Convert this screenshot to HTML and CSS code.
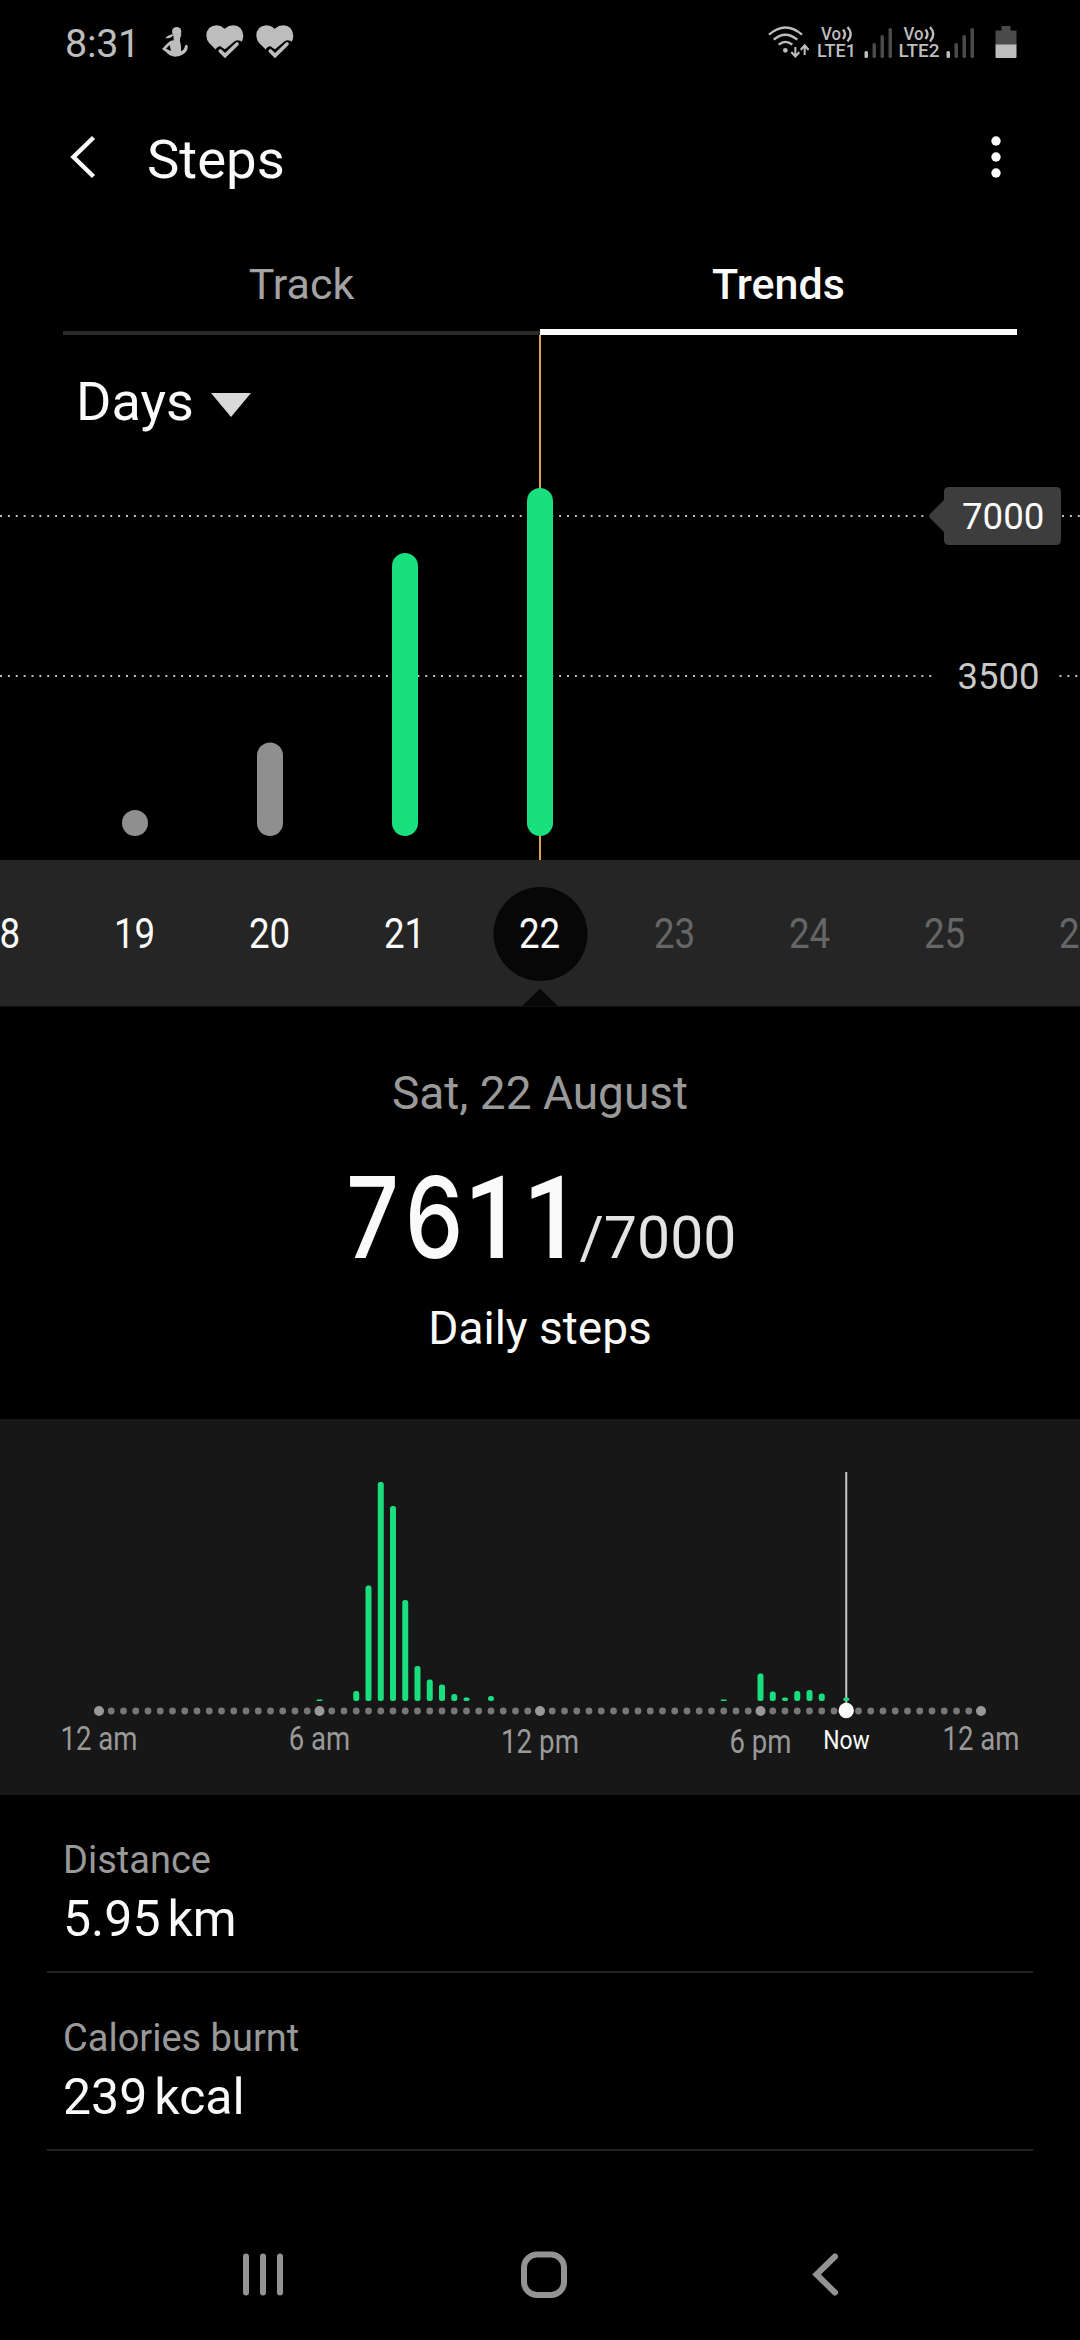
FILE: index.html
```html
<!DOCTYPE html>
<html lang="en">

<head>
  <meta charset="UTF-8">
  <meta name="viewport" content="width=device-width, initial-scale=1.0">
  <title>Steps</title>
  <link rel="stylesheet" href="styles.css">
</head>

<body>

  <!-- Status bar -->
  <div class="status-bar">
    <span class="clock">8:31</span>
    <svg class="icon-woman" width="28" height="32" viewBox="363 78 84 96">
      <circle cx="410" cy="95" r="14"/>
      <path d="M400 104 L418 104 L425 101 L420 116 L420 124 Q424 135 423 153 Q433 150 435 137 Q439 131 443 138 Q445 152 432 161 Q420 170 404 170 Q388 168 378 156 L366 147 L384 128 Q392 121 401 121 Z"/>
      <path d="M375 115 Q382 106 397 102 L400 107 Q391 116 375 115 Z"/>
      <path class="cut" d="M378 146 L389 135 L393 153 Z"/>
    </svg>
    <svg class="icon-heart" width="38" height="34" viewBox="497 74 114 102">
      <path d="M553 85 Q541 75 528 75 Q498 77 498 107 Q498 118 507 129 L554 175 L601 129 Q609 118 609 106 Q606 76 579 75 Q565 75 553 85 Z"/>
      <path class="cut" d="M526 147 Q536 132 546 142 L554 147 L583 123 Q594 116 607 126 L612 122 L612 176 L526 176 Z"/>
      <path class="check" d="M540 152 L554 166 L590 131"/>
    </svg>
    <svg class="icon-heart second" width="38" height="34" viewBox="497 74 114 102">
      <path d="M553 85 Q541 75 528 75 Q498 77 498 107 Q498 118 507 129 L554 175 L601 129 Q609 118 609 106 Q606 76 579 75 Q565 75 553 85 Z"/>
      <path class="cut" d="M526 147 Q536 132 546 142 L554 147 L583 123 Q594 116 607 126 L612 122 L612 176 L526 176 Z"/>
      <path class="check" d="M540 152 L554 166 L590 131"/>
    </svg>

    <div class="status-right">
      <svg class="icon-wifi" width="44" height="34" viewBox="45 72 132 102">
        <g class="line">
          <path d="M51 101 Q100 58 150 101"/>
          <path d="M65 116 Q100 86 136 116"/>
          <path d="M80 131 Q100 114 121 131"/>
        </g>
        <circle cx="100" cy="148" r="7"/>
        <path d="M127 138 H133 V158 L140 151 L144 156 L130 171 L116 156 L120 151 L127 158 Z"/>
        <path d="M155 162 H161 V142 L168 149 L172 144 L158 128 L144 144 L148 149 L155 142 Z"/>
      </svg>
      <svg class="icon-lte" width="42" height="34" viewBox="0 0 42 34">
        <text x="4" y="14.5" textLength="20" lengthAdjust="spacingAndGlyphs">Vo</text>
        <path class="wave" d="M26 4.5 Q30 9 26 14 M30.5 2 Q37 9 30.5 16.5"/>
        <text x="0" y="32" textLength="39" lengthAdjust="spacingAndGlyphs">LTE1</text>
      </svg>
      <svg class="icon-signal" width="28" height="32" viewBox="0 0 28 32">
        <rect x="0.5" y="24" width="3.5" height="7" rx="1.5"/>
        <rect class="dim" x="8.5" y="16" width="3.5" height="15" rx="1.5"/>
        <rect class="dim" x="16.5" y="8" width="3.5" height="23" rx="1.5"/>
        <rect class="dim" x="24.5" y="1" width="3.5" height="30" rx="1.5"/>
      </svg>
      <svg class="icon-lte lte2" width="42" height="34" viewBox="0 0 42 34">
        <text x="4.5" y="14.5" textLength="20" lengthAdjust="spacingAndGlyphs">Vo</text>
        <path class="wave" d="M26.5 4.5 Q30.5 9 26.5 14 M31 2 Q37.5 9 31 16.5"/>
        <text x="-0.5" y="32" textLength="41" lengthAdjust="spacingAndGlyphs">LTE2</text>
      </svg>
      <svg class="icon-signal" width="28" height="32" viewBox="0 0 28 32">
        <rect x="0.5" y="24" width="3.5" height="7" rx="1.5"/>
        <rect class="dim" x="8.5" y="16" width="3.5" height="15" rx="1.5"/>
        <rect class="dim" x="16.5" y="8" width="3.5" height="23" rx="1.5"/>
        <rect class="dim" x="24.5" y="1" width="3.5" height="30" rx="1.5"/>
      </svg>
      <svg class="icon-battery" width="22" height="34" viewBox="0 0 22 34">
        <path class="dim" d="M6.5 1 H15.5 V5.5 H21.5 V20 H0.5 V5.5 H6.5 Z"/>
        <path d="M0.5 19.5 H21.5 V32 Q21.5 33 20.5 33 H1.5 Q0.5 33 0.5 32 Z"/>
      </svg>
    </div>
  </div>

  <!-- Title bar -->
  <header class="header">
    <svg class="back" width="28" height="46" viewBox="0 0 28 46">
      <path d="M24.5 3.5 L4.5 23 L24.5 42.5"/>
    </svg>
    <h1>Steps</h1>
    <svg class="more" width="12" height="44" viewBox="0 0 12 44">
      <circle cx="6" cy="6" r="4.7"/>
      <circle cx="6" cy="22" r="4.7"/>
      <circle cx="6" cy="38" r="4.7"/>
    </svg>
  </header>

  <nav class="tabs">
    <div class="tab">Track</div>
    <div class="tab active">Trends</div>
  </nav>

  <!-- Trend chart -->
  <section class="trend">
    <svg width="1080" height="525" viewBox="0 0 1080 525">
      <line class="marker" x1="540" y1="0" x2="540" y2="525"/>
      <line class="grid" x1="0" y1="181" x2="926" y2="181"/>
      <line class="grid" x1="0" y1="341" x2="933" y2="341"/>
      <line class="grid" x1="1062" y1="181" x2="1080" y2="181"/>
      <line class="grid" x1="1059.5" y1="341" x2="1080" y2="341"/>
      <rect class="bar low" x="122" y="475" width="26" height="26" rx="13"/>
      <rect class="bar low" x="257" y="407.5" width="26" height="93.5" rx="13"/>
      <rect class="bar" x="392" y="218" width="26" height="283" rx="13"/>
      <rect class="bar" x="527" y="153" width="26" height="348" rx="13"/>
      <path class="tag" d="M949 152 H1056 Q1061 152 1061 157 V205 Q1061 210 1056 210 H949 Q944 210 944 205 V197 L930 183 Q928 181 930 179 L944 165 V157 Q944 152 949 152 Z"/>
      <text class="goal" x="962" y="194" textLength="82.5" lengthAdjust="spacingAndGlyphs">7000</text>
      <text class="half" x="957.5" y="354" textLength="82" lengthAdjust="spacingAndGlyphs">3500</text>
    </svg>
    <div class="period">
      <span>Days</span>
      <svg width="40" height="24" viewBox="0 0 40 24"><path d="M0 0 H40 L20 24 Z"/></svg>
    </div>
  </section>

  <!-- Day picker -->
  <div class="days">
    <div class="day"><span>18</span></div>
    <div class="day"><span>19</span></div>
    <div class="day"><span>20</span></div>
    <div class="day"><span>21</span></div>
    <div class="day selected"><span>22</span></div>
    <div class="day future"><span>23</span></div>
    <div class="day future"><span>24</span></div>
    <div class="day future"><span>25</span></div>
    <div class="day future"><span>26</span></div>
  </div>

  <section class="summary">
    <p class="date">Sat, 22 August</p>
    <div class="count">
      <div class="steps"><b class="wide">7</b><b class="wide">6</b><b>1</b><b>1</b></div>
      <span class="target">/7000</span>
    </div>
    <p class="caption">Daily steps</p>
  </section>

  <!-- Steps through the day -->
  <section class="hourly">
    <svg width="1080" height="376" viewBox="0 1419 1080 376">
      <line class="now-line" x1="846.25" y1="1472" x2="846.25" y2="1704"/>
      <g id="hourBars"></g>
      <line class="dots" x1="99" y1="1711" x2="981.5" y2="1711"/>
      <g class="big-dots">
        <circle cx="99" cy="1711" r="5"/>
        <circle cx="319.5" cy="1711" r="5"/>
        <circle cx="540" cy="1711" r="5"/>
        <circle cx="760.5" cy="1711" r="5"/>
        <circle cx="981" cy="1711" r="5"/>
      </g>
      <circle class="now-dot" cx="846.25" cy="1710.5" r="7.7"/>
      <g class="labels">
        <text x="99" y="1750" textLength="77" lengthAdjust="spacingAndGlyphs">12 am</text>
        <text x="319.5" y="1750" textLength="61.5" lengthAdjust="spacingAndGlyphs">6 am</text>
        <text x="540" y="1753" textLength="78" lengthAdjust="spacingAndGlyphs">12 pm</text>
        <text x="760.5" y="1753" textLength="62" lengthAdjust="spacingAndGlyphs">6 pm</text>
        <text x="981" y="1750" textLength="77" lengthAdjust="spacingAndGlyphs">12 am</text>
        <text class="now" x="846.5" y="1749" textLength="46.5" lengthAdjust="spacingAndGlyphs">Now</text>
      </g>
    </svg>
  </section>

  <ul class="stats">
    <li>
      <div class="label">Distance</div>
      <div class="value"><span>5.95</span><span>km</span></div>
    </li>
    <li>
      <div class="label">Calories burnt</div>
      <div class="value"><span>239</span><span>kcal</span></div>
    </li>
  </ul>

  <!-- System navigation -->
  <div class="nav-bar">
    <svg width="48" height="50" viewBox="0 0 48 50">
      <path d="M7 6.5 V42.5 M24 6.5 V42.5 M41 6.5 V42.5"/>
    </svg>
    <svg width="48" height="50" viewBox="0 0 48 50">
      <rect x="4" y="4.5" width="40" height="40.5" rx="13"/>
    </svg>
    <svg width="48" height="50" viewBox="0 0 48 50">
      <path d="M34 6.5 L15.5 24.5 L34 42.5"/>
    </svg>
  </div>

  <script>
    // [slot, height], one slot is 20 minutes
    const hourData = [
      [18, 1.5], [21, 10], [22, 115.5], [23, 219], [24, 195], [25, 101],
      [26, 35], [27, 21.5], [28, 16.5], [29, 7], [30, 3.5], [32, 5],
      [51, 1.5], [54, 27.5], [55, 9.5], [56, 3.5], [57, 10],
      [58, 11], [59, 7.5], [61, 3.5]
    ];
    const hourBars = document.getElementById('hourBars');

    hourData.forEach(([slot, height]) => {
      const bar = document.createElementNS('http://www.w3.org/2000/svg', 'rect');
      bar.setAttribute('x', 99 + slot * 12.25 - 3);
      bar.setAttribute('y', 1701 - height);
      bar.setAttribute('width', 6);
      bar.setAttribute('height', height);
      bar.setAttribute('rx', Math.min(2.5, height / 2));
      hourBars.appendChild(bar);
    });
  </script>
</body>

</html>
```
FILE: styles.css
```css
* {
  box-sizing: border-box;
}

body {
  font-family: Roboto, "Liberation Sans", sans-serif;
  margin: 0;
  display: flex;
  flex-direction: column;
  width: 1080px;
  height: 2340px;
  overflow: hidden;
  background-color: #000;
  color: #fafafa;
}

svg {
  display: block;
  flex-shrink: 0;
  overflow: visible;
}

/* Status bar */
.status-bar {
  display: flex;
  align-items: center;
  height: 86px;
  padding-left: 65px;
  padding-right: 63px;
  color: #bdbdbd;
  fill: #bdbdbd;
}

.clock {
  width: 96px;
  padding-top: 1px;
  font-size: 39.5px;
  letter-spacing: -0.3px;
}

.icon-heart {
  margin-left: 17px;
  margin-top: -3px;
}

.icon-heart.second {
  margin-left: 12px;
}

.icon-woman {
  margin-top: -2px;
}

.cut {
  fill: #000;
}

.check {
  fill: none;
  stroke: #bdbdbd;
  stroke-width: 11;
  stroke-linecap: round;
}

.status-right {
  display: flex;
  align-items: flex-end;
  height: 34px;
  margin-left: auto;
  margin-top: -2px;
}

.icon-wifi .line {
  fill: none;
  stroke: #bdbdbd;
  stroke-width: 7;
}

.icon-lte {
  margin-left: 6px;
  font-size: 18px;
  font-weight: 500;
}

.icon-lte.lte2 {
  margin-left: 7px;
}

.wave {
  fill: none;
  stroke: #bdbdbd;
  stroke-width: 2.4;
}

.icon-signal {
  margin-left: 5px;
}

.dim {
  fill: #4a4a4a;
}

.icon-battery {
  margin-left: 21px;
}

/* Header */
.header {
  display: flex;
  align-items: center;
  height: 141px;
  padding: 0 78px 0 69px;
}

.header h1 {
  margin: 5px auto 0 50px;
  font-size: 54.5px;
  font-weight: 400;
}

.back path {
  fill: none;
  stroke: #fafafa;
  stroke-width: 4.5;
}

.more {
  fill: #fafafa;
}

.tabs {
  display: flex;
  height: 108px;
  padding: 0 63px;
}

.tab {
  flex: 1;
  padding-top: 32px;
  border-bottom: 4px solid #2b2b2b;
  color: #a3a3a3;
  font-size: 43px;
  line-height: 50px;
  text-align: center;
}

.tab.active {
  border-bottom: 6px solid #fafafa;
  color: #fafafa;
  font-weight: 500;
}

/* Trend chart */
.trend {
  position: relative;
  height: 525px;
}

.period {
  position: absolute;
  left: 76px;
  top: 37px;
  display: flex;
  align-items: center;
  font-size: 54px;
  line-height: 60px;
}

.period svg {
  margin-left: 17px;
  margin-top: 6px;
  fill: #d9d9d9;
}

.marker {
  stroke: #dfa052;
  stroke-width: 2;
}

.grid {
  stroke: #c4c4c4;
  stroke-width: 2;
  stroke-dasharray: 1.97 5.905;
}

.bar {
  fill: #1adf7e;
}

.bar.low {
  fill: #8f8f8f;
}

.tag {
  fill: #3d3d3d;
}

.goal,
.half {
  fill: #fafafa;
  font-size: 37.5px;
}

.half {
  fill: #c8c8c8;
}

/* Day picker */
.days {
  position: relative;
  display: flex;
  justify-content: center;
  height: 147px;
  overflow: hidden;
  background-color: #252525;
  border-bottom: 1px solid #101010;
}

.day {
  display: flex;
  flex: 0 0 135px;
  align-items: center;
  justify-content: center;
  font-size: 42px;
}

.day span {
  transform: scaleX(0.875);
}

.day.future {
  color: #666;
}

.day.selected {
  font-weight: 450;
  background: radial-gradient(circle at 50% 74px, #070707 46.5px, transparent 47.5px);
}

.days::after {
  content: "";
  position: absolute;
  left: 522px;
  bottom: 0;
  border: 18px solid transparent;
  border-top: none;
  border-bottom: 17px solid #070707;
}

/* Summary */
.summary {
  display: flex;
  flex-direction: column;
  align-items: center;
  height: 412px;
  padding-top: 59px;
}

.summary p {
  margin: 0;
  font-size: 46px;
  line-height: 54px;
}

.summary .date {
  color: #999;
}

.count {
  display: flex;
  align-items: baseline;
  height: 120px;
  margin-top: 37px;
  margin-bottom: 24px;
}

.steps {
  display: flex;
  align-items: baseline;
  width: 236px;
  padding-left: 2px;
}

.steps b {
  flex: 0 0 59px;
  min-width: 0;
  font-size: 115px;
  font-weight: 500;
  line-height: 120px;
  transform: scaleX(0.9);
  transform-origin: left;
}

.steps .wide {
  font-family: Inter, Roboto, sans-serif;
  font-size: 113px;
  transform: scaleX(0.82);
}

.target {
  color: #e3e3e3;
  font-size: 59px;
}

/* Hourly chart */
.hourly {
  height: 376px;
  background-color: #171717;
}

#hourBars {
  fill: #1adf7e;
}

.now-line {
  stroke: #c8c8c8;
  stroke-width: 2;
}

.dots {
  stroke: #777;
  stroke-width: 6.8;
  stroke-linecap: round;
  stroke-dasharray: 0 12.25;
}

.big-dots {
  fill: #999;
}

.now-dot {
  fill: #fafafa;
}

.labels {
  fill: #999;
  font-size: 32.5px;
  text-anchor: middle;
}

.labels .now {
  fill: #fafafa;
  font-size: 26px;
}

/* Stats list */
.stats {
  list-style-type: none;
  margin: 0 47px;
  padding: 0;
}

.stats li {
  height: 178px;
  padding: 43px 16px 0;
  border-bottom: 2px solid #222;
}

.label {
  color: #999;
  font-size: 38px;
  line-height: 44px;
}

.value {
  display: flex;
  gap: 7px;
  margin-top: 8px;
  font-size: 50px;
  line-height: 58px;
}

/* System navigation */
.nav-bar {
  display: grid;
  grid-template-columns: repeat(3, 281px);
  justify-content: center;
  justify-items: center;
  align-items: center;
  height: 131px;
  margin-top: auto;
  padding-left: 7px;
  fill: none;
  stroke: #939393;
  stroke-width: 6;
  stroke-linecap: round;
}
```
